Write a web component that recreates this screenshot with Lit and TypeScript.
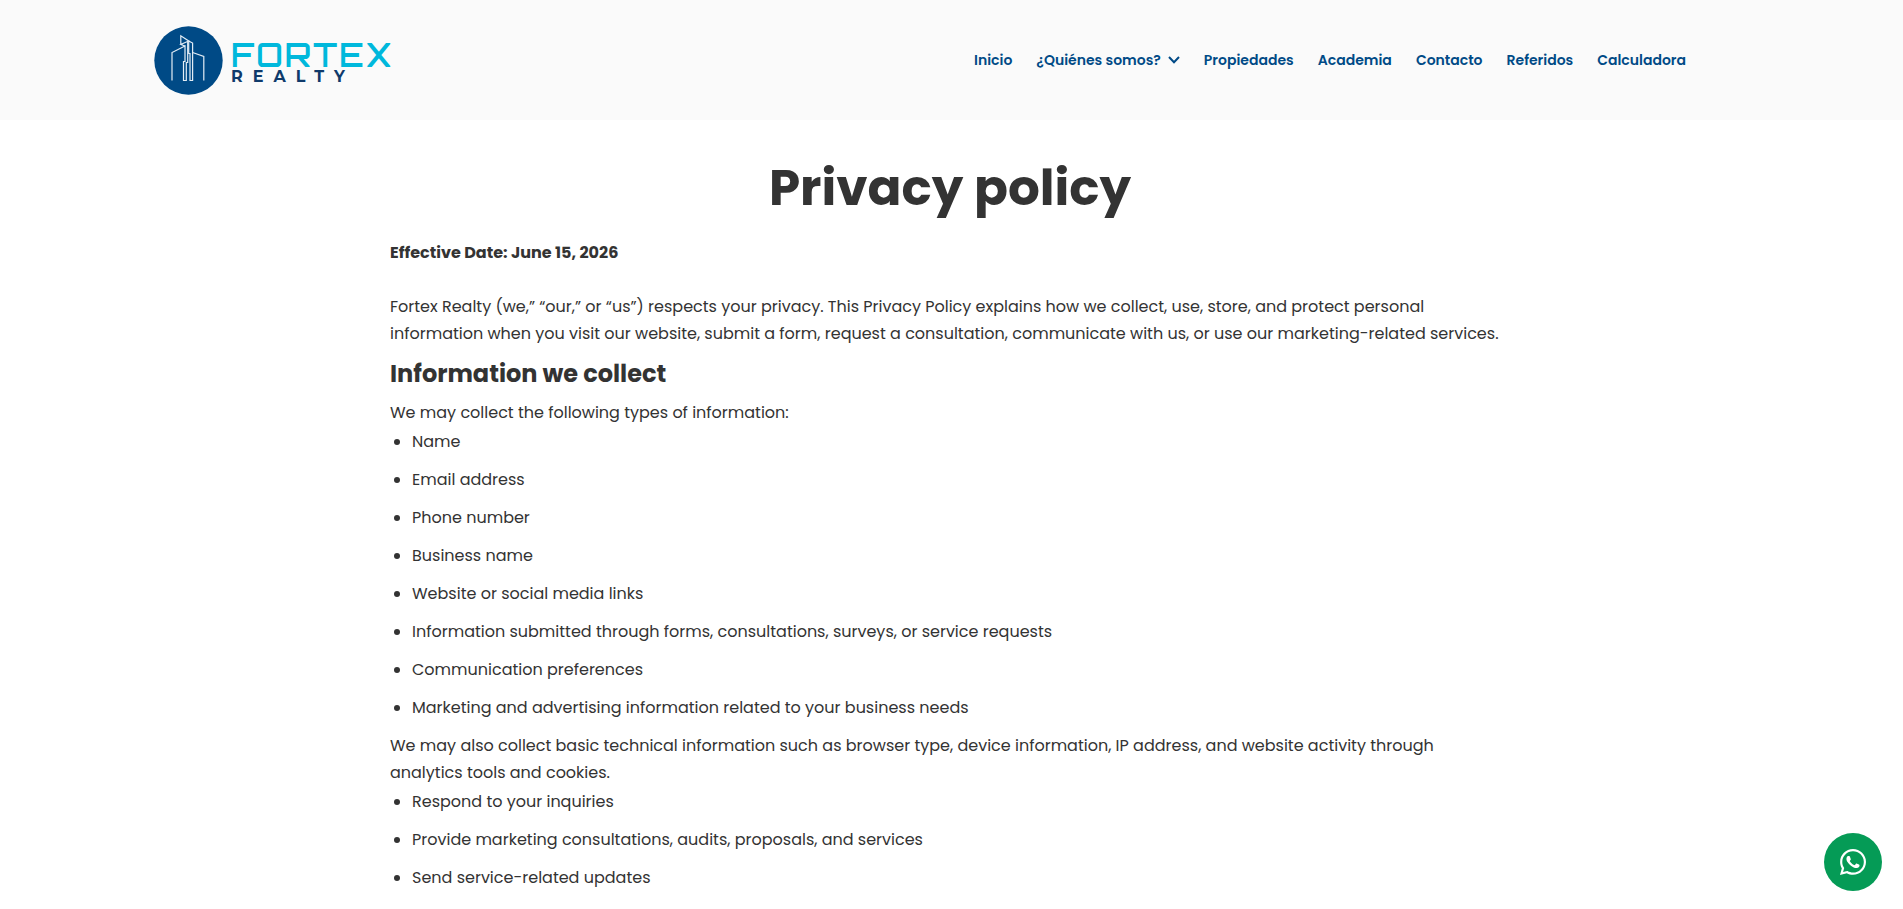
import { LitElement, html, css } from "lit";
import { customElement } from "lit/decorators.js";

const COLLECTED = [
  "Name",
  "Email address",
  "Phone number",
  "Business name",
  "Website or social media links",
  "Information submitted through forms, consultations, surveys, or service requests",
  "Communication preferences",
  "Marketing and advertising information related to your business needs",
];

const USES = [
  "Respond to your inquiries",
  "Provide marketing consultations, audits, proposals, and services",
  "Send service-related updates",
];

const LINKS = ["Propiedades", "Academia", "Contacto", "Referidos", "Calculadora"];

@customElement("fortex-logo")
export class FortexLogo extends LitElement {
  static styles = css`
    :host { display: block; }
    .logo { display: flex; align-items: center; gap: 8px; text-decoration: none; }
    .mark { width: 69px; height: 69px; display: block; }
    .words { display: flex; flex-direction: column; padding-top: 6px; }
    .name {
      font: 600 32px/28px Orbitron, "DejaVu Sans", sans-serif;
      letter-spacing: 2px;
      color: #00b8dc;
    }
    .sub {
      font: 700 16px/16px Montserrat, Poppins, sans-serif;
      letter-spacing: 10px;
      color: #0f3a6b;
    }
  `;
  render() {
    return html`<a class="logo" href="#" aria-label="Fortex Realty">
      <svg class="mark" viewBox="0 0 69 69" aria-hidden="true">
        <circle cx="34.500" cy="34.500" r="34.200" fill="#004a86" />
        <g fill="none" stroke="#e3edf5" stroke-width="1.200">
          <path d="M18 54.500V26.500L31 20V35.500H29.500V54.500H32.300V36.500H33.700V16" />
          <path d="M26.800 18.500V9.800L34.700 15L26.800 18.500L31 20" />
          <path d="M34.700 15L38.600 17V54.500H36V27.500H34.700V15" />
          <path d="M38.600 26.500L49.800 30.500V54.500" />
        </g>
      </svg>
      <span class="words"><span class="name">FORTEX</span><span class="sub">REALTY</span></span>
    </a>`;
  }
}

@customElement("app-root")
export class AppRoot extends LitElement {
  static styles = css`
    :host {
      display: block;
      font-family: Poppins, Inter, sans-serif;
      font-size: 16px;
      line-height: 27px;
      color: #333;
      background: #fff;
    }
    .header { background: #fafafa; }
    .header, .body { padding-right: 3px; }
    .bar {
      max-width: 1592px;
      margin: 0 auto;
      box-sizing: border-box;
      min-height: 120px;
      display: flex;
      align-items: center;
      justify-content: space-between;
    }
    .nav { display: flex; align-items: center; gap: 24px; padding-right: 60px; }
    .link {
      display: flex;
      align-items: center;
      gap: 7px;
      font-size: 14px;
      line-height: 20px;
      font-weight: 600;
      color: #004a86;
      text-decoration: none;
    }
    .chevron { width: 12px; height: 8px; }
    .content {
      max-width: 1120px;
      margin: 0 auto;
      padding: 32px 12px 0;
    }
    .title { margin: 0 0 15px; font-size: 50px; line-height: 72px; font-weight: 700; text-align: center; }
    .text { margin: 0; }
    .date { font-weight: 700; margin-bottom: 27px; }
    .subtitle { margin: 9px 0 8px; font-size: 24px; line-height: 35px; font-weight: 700; }
    .list { margin: 0; padding: 2px 0 0 22px; }
    .item { margin-bottom: 11px; }
    .chat {
      position: fixed;
      right: 21px;
      bottom: 18px;
      width: 58px;
      height: 58px;
      border-radius: 50%;
      background: #059b56;
      display: flex;
      align-items: center;
      justify-content: center;
    }
    .chat-icon { width: 26px; height: 26px; fill: #fff; }
  `;

  private list(items: string[]) {
    return html`<ul class="list">${items.map((t) => html`<li class="item">${t}</li>`)}</ul>`;
  }

  render() {
    return html`
      <header class="header">
        <div class="bar">
          <fortex-logo></fortex-logo>
          <nav class="nav">
            <a class="link" href="#">Inicio</a>
            <a class="link" href="#">¿Quiénes somos?
              <svg class="chevron" viewBox="0 0 12 8" fill="none" stroke="currentColor" stroke-width="2" aria-hidden="true"><path d="M1 1L6 6.200L11 1" /></svg>
            </a>
            ${LINKS.map((t) => html`<a class="link" href="#">${t}</a>`)}
          </nav>
        </div>
      </header>
      <div class="body">
        <main class="content">
          <h1 class="title">Privacy policy</h1>
          <p class="text date">Effective Date: June 15, 2026</p>
          <p class="text">Fortex Realty (we,” “our,” or “us”) respects your privacy. This Privacy Policy explains how we collect, use, store, and protect personal information when you visit our website, submit a form, request a consultation, communicate with us, or use our marketing-related services.</p>
          <h2 class="subtitle">Information we collect</h2>
          <p class="text">We may collect the following types of information:</p>
          ${this.list(COLLECTED)}
          <p class="text">We may also collect basic technical information such as browser type, device information, IP address, and website activity through analytics tools and cookies.</p>
          ${this.list(USES)}
        </main>
      </div>
      <a class="chat" href="#" aria-label="WhatsApp">
        <svg class="chat-icon" viewBox="0 0 448 448" aria-hidden="true"><path d="M380.900 65.100C339 23.100 283.200 0 223.900 0 101.500 0 1.900 99.600 1.900 222c0 39.100 10.200 77.300 29.600 111L0 448l117.700-30.900c32.400 17.700 68.900 27 106.100 27h.1c122.300 0 224.100-99.600 224.100-222 0-59.300-25.200-115-67.100-157zM223.900 406.700c-33.200 0-65.700-8.900-94-25.700l-6.700-4-69.800 18.300L72 327.200l-4.400-7c-18.500-29.400-28.200-63.300-28.200-98.200 0-101.700 82.800-184.500 184.600-184.500 49.300 0 95.600 19.200 130.400 54.100s56.200 81.200 56.100 130.500c0 101.800-84.900 184.600-186.600 184.600zM325.100 268.500c-5.500-2.800-32.800-16.200-37.900-18-5.100-1.900-8.800-2.800-12.500 2.800s-14.300 18-17.600 21.800c-3.200 3.700-6.500 4.200-12 1.400-32.600-16.300-54-29.100-75.500-66-5.700-9.800 5.700-9.100 16.300-30.300 1.800-3.700.9-6.900-.5-9.700s-12.500-30.100-17.100-41.200c-4.500-10.800-9.100-9.300-12.500-9.500-3.200-.2-6.900-.2-10.600-.2s-9.700 1.400-14.800 6.900c-5.100 5.600-19.400 19-19.400 46.300s19.900 53.700 22.600 57.400c2.800 3.700 39.100 59.700 94.800 83.800 35.200 15.200 49 16.500 66.600 13.900 10.700-1.600 32.800-13.400 37.400-26.400s4.600-24.100 3.200-26.400c-1.300-2.500-5-3.900-10.500-6.600z" /></svg>
      </a>
    `;
  }
}
